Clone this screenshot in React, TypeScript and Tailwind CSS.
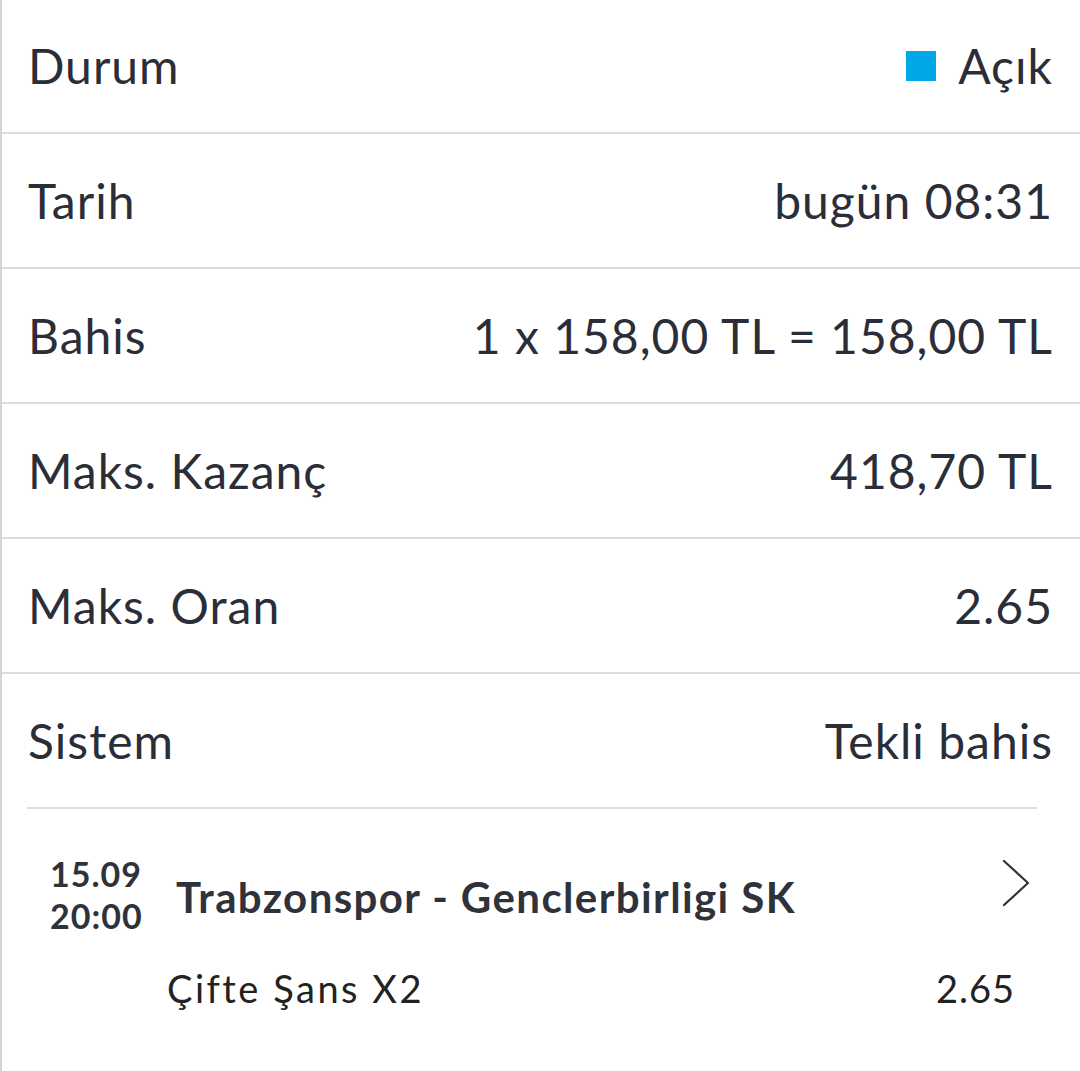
const rows = [
  { label: 'Durum', value: 'Açık', status: true },
  { label: 'Tarih', value: 'bugün 08:31' },
  { label: 'Bahis', value: '1 x 158,00 TL = 158,00 TL' },
  { label: 'Maks. Kazanç', value: '418,70 TL' },
  { label: 'Maks. Oran', value: '2.65' },
  { label: 'Sistem', value: 'Tekli bahis' },
];

export default function App() {
  return (
    <div
      className="min-h-[1071px] w-[1080px] border-l-2 border-[#d4d4d4] bg-white text-[#2b2e38]"
      style={{ fontFamily: 'Lato, "Noto Sans", sans-serif' }}
    >
      {/* Summary rows */}
      {rows.map((row, i) => (
        <div
          key={row.label}
          className={
            i === 0
              ? 'flex h-[134px] items-center justify-between border-b-2 border-[#dcdcdc] pl-[26px] pr-[27px] text-[48px] tracking-[1px]'
              : i < rows.length - 1
                ? 'flex h-[135px] items-center justify-between border-b-2 border-[#dcdcdc] pl-[26px] pr-[27px] text-[48px] tracking-[1px]'
                : 'flex h-[133px] items-center justify-between pl-[26px] pr-[27px] text-[48px] tracking-[1px]'
          }
        >
          <span>{row.label}</span>
          <span className="flex items-center gap-[22px]">
            {row.status && <span className="h-[30px] w-[30px] bg-[#00a8e8]" />}
            {row.value}
          </span>
        </div>
      ))}

      {/* Selection */}
      <div className="ml-[25px] mr-[43px] border-t-2 border-[#dde0e3]">
        <div className="flex items-start pt-[44px]">
          <div className="w-[149px] shrink-0 pl-[23px] text-[34px] font-bold leading-[42px] tracking-[1px] text-[#2f323a]">
            <div>15.09</div>
            <div>20:00</div>
          </div>
          <div className="flex-1 pt-[19px] text-[42px] font-bold leading-[50px] tracking-[1.4px] text-[#2f323a]">
            Trabzonspor - Genclerbirligi SK
          </div>
          <svg
            className="mr-[6px] mt-[5px] h-[50px] w-[30px] text-[#333]"
            viewBox="0 0 30 50"
            fill="none"
            stroke="currentColor"
            strokeWidth="2.2"
            strokeLinecap="round"
            strokeLinejoin="round"
          >
            <polyline points="3,3 27,25 3,47" />
          </svg>
        </div>
        <div className="flex items-center justify-between pl-[140px] pr-[22px] pt-[28px] text-[38px] leading-[46px] text-[#222]">
          <span className="tracking-[2.5px]">Çifte Şans X2</span>
          <span className="tracking-[1px]">2.65</span>
        </div>
      </div>
    </div>
  );
}
